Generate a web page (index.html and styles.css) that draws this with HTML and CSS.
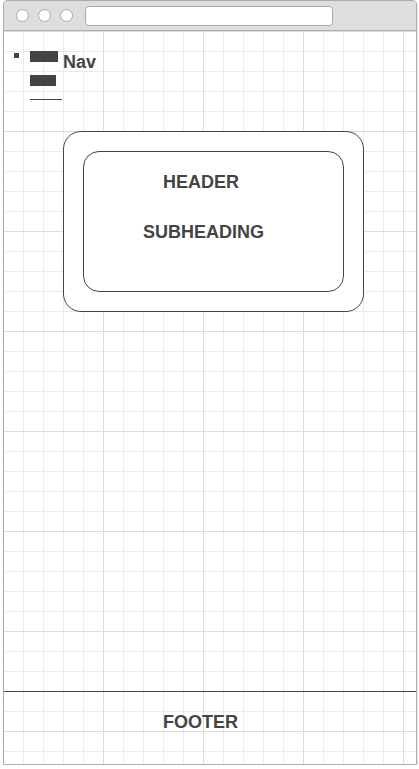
FILE: index.html
```html
<!DOCTYPE html>
<html>
<head>
<meta charset="utf-8">
<link rel="stylesheet" href="styles.css">
</head>
<body>
<div class="frame">
  <div class="titlebar">
    <span class="dot"></span>
    <span class="dot"></span>
    <span class="dot"></span>
    <span class="address"></span>
  </div>
  <div class="content">
    <main class="main">
      <div class="nav">
        <span class="bullet"></span>
        <span class="nav-icon">
          <span class="bar bar-1"></span>
          <span class="bar bar-2"></span>
          <span class="rule"></span>
        </span>
        <span class="nav-label">Nav</span>
      </div>
      <section class="card">
        <div class="card-inner">
          <h1 class="header">HEADER</h1>
          <h2 class="subheading">SUBHEADING</h2>
        </div>
      </section>
    </main>
    <footer class="footer">
      <span class="footer-label">FOOTER</span>
    </footer>
  </div>
</div>
</body>
</html>
```

FILE: styles.css
```css
html, body {
  margin: 0;
  padding: 0;
  background: #ffffff;
}

body {
  font-family: "Liberation Sans", Arial, sans-serif;
  color: #444444;
}

.frame {
  box-sizing: border-box;
  margin-left: 3px;
  width: 414px;
  height: 765px;
  border: 1px solid #acacac;
  border-radius: 4px 4px 0 0;
  box-shadow: 1px 2px 2px rgba(0, 0, 0, 0.12);
  display: flex;
  flex-direction: column;
  overflow: hidden;
}

.titlebar {
  height: 29px;
  flex: none;
  background: #dedede;
  border-bottom: 1px solid #acacac;
  display: flex;
  align-items: center;
  padding-left: 12px;
  gap: 9px;
}

.dot {
  box-sizing: border-box;
  width: 13px;
  height: 13px;
  border-radius: 50%;
  background: #ffffff;
  border: 1px solid #a8a8a8;
}

.address {
  box-sizing: border-box;
  width: 248px;
  height: 20px;
  margin-left: 3px;
  background: #ffffff;
  border: 1px solid #a8a8a8;
  border-radius: 4px;
}

.content {
  flex: 1;
  display: flex;
  flex-direction: column;
  background-color: #ffffff;
  background-image:
    linear-gradient(to right, #dcdcdc 1px, transparent 1px),
    linear-gradient(to bottom, #dcdcdc 1px, transparent 1px),
    linear-gradient(to right, #ebebeb 1px, transparent 1px),
    linear-gradient(to bottom, #ebebeb 1px, transparent 1px);
  background-size: 100px 100px, 100px 100px, 20px 20px, 20px 20px;
  background-position: -1px 0, -1px 0, -1px 0, -1px 0;
}

.main {
  flex: 1;
  padding-top: 20px;
}

.nav {
  display: flex;
  align-items: flex-start;
}

.bullet {
  width: 5px;
  height: 5px;
  margin-left: 10px;
  margin-top: 2px;
  background: #444444;
}

.nav-icon {
  display: flex;
  flex-direction: column;
  width: 32px;
  margin-left: 11px;
}

.bar {
  height: 11px;
  background: #444444;
}

.bar-1 {
  width: 28px;
}

.bar-2 {
  width: 26px;
  margin-top: 13px;
}

.rule {
  width: 32px;
  height: 1px;
  margin-top: 13px;
  background: #444444;
}

.nav-label {
  font-size: 18px;
  font-weight: bold;
  line-height: 20px;
  margin-top: 1px;
  margin-left: 1px;
}

.card {
  box-sizing: border-box;
  width: 301px;
  height: 181px;
  margin: 31px 0 0 59px;
  padding: 19px;
  border: 1px solid #444444;
  border-radius: 18px;
  background: #ffffff;
}

.card-inner {
  box-sizing: border-box;
  height: 141px;
  border: 1px solid #444444;
  border-radius: 16px;
  padding-top: 20px;
}

.header,
.subheading {
  margin: 0;
  font-size: 18px;
  font-weight: bold;
  line-height: 20px;
}

.header {
  margin-left: 79px;
}

.subheading {
  margin-top: 30px;
  margin-left: 59px;
}

.footer {
  height: 73px;
  flex: none;
  box-sizing: border-box;
  border-top: 1px solid #444444;
  padding: 20px 0 0 159px;
}

.footer-label {
  display: block;
  font-size: 18px;
  font-weight: bold;
  line-height: 20px;
}
```
